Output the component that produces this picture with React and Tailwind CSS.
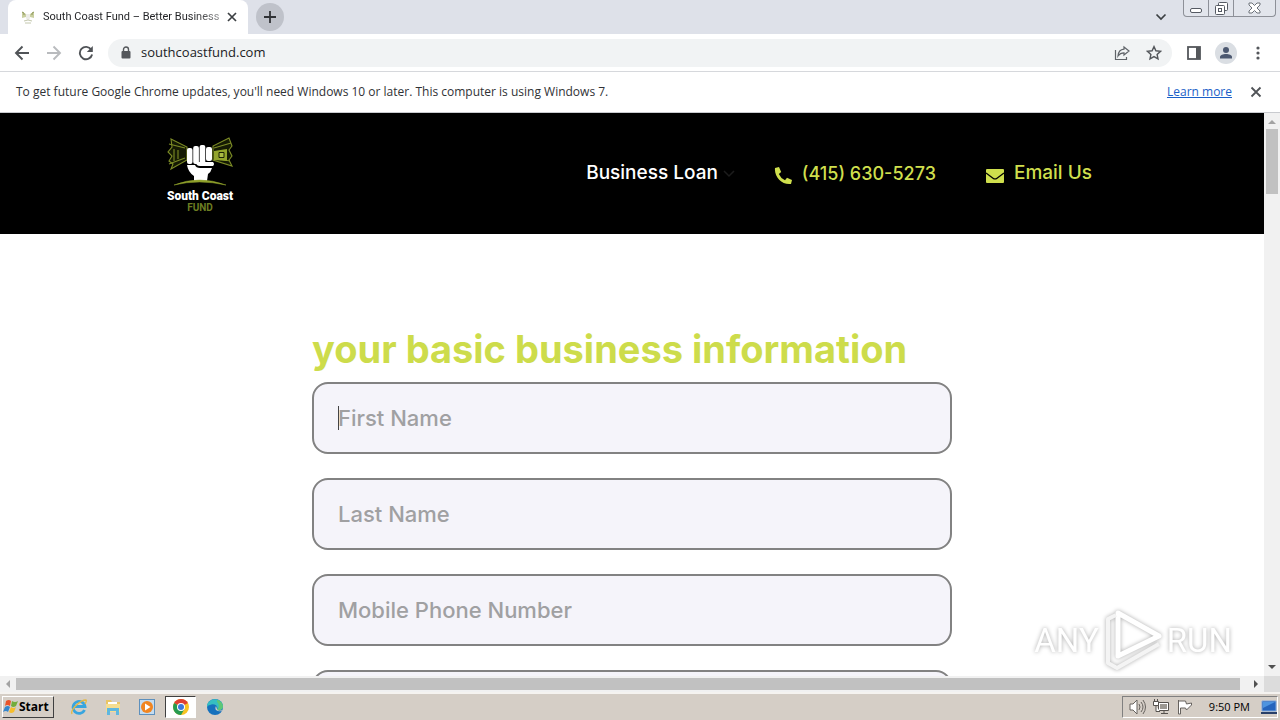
import { useState } from "react";

const fields = [
  { id: "first-name", label: "First Name" },
  { id: "last-name", label: "Last Name" },
  { id: "mobile-phone", label: "Mobile Phone Number" },
  { id: "email", label: "Email Address" },
];

function Favicon() {
  return (
    <svg viewBox="0 0 16 16" className="size-4 shrink-0" aria-hidden="true">
      <path d="M2 3l4 2v3L2 9zM14 3l-4 2v3l4 1z" fill="#c9cfa0" />
      <path d="M2 3l2 1v2M14 3l-2 1v2" fill="none" stroke="#8b9554" />
      <path d="M6 5h4v4l-1 2H7L6 9z" fill="#ecece8" />
      <path d="M4 12q4-2 8 0M5 14h6" fill="none" stroke="#c4c8ae" />
    </svg>
  );
}

function TabStrip() {
  return (
    <div className="flex h-[34px] shrink-0 items-start bg-[#dee1e9]">
      <div className="ml-2 flex h-[34px] w-[240px] items-center rounded-t-lg bg-white pl-3 pr-2">
        <Favicon />
        <span className="ml-[7px] w-[176px] whitespace-nowrap bg-linear-to-r from-[#202124] from-85% to-[#20212480] bg-clip-text font-['Roboto',sans-serif] text-[11px] text-transparent">
          South Coast Fund – Better Business
        </span>
        <button aria-label="Close tab" className="ml-[5px] flex size-4 items-center justify-center">
          <svg viewBox="0 0 10 10" className="size-[10px]">
            <path d="M1 1l8 8M9 1l-8 8" stroke="#3c4043" strokeWidth="1.7" />
          </svg>
        </button>
      </div>
      <button aria-label="New tab" className="ml-2 mt-[3px] flex size-7 items-center justify-center rounded-full bg-[#bfc2ca]">
        <svg viewBox="0 0 12 12" className="size-3">
          <path d="M6 0v12M0 6h12" stroke="#303236" strokeWidth="1.8" />
        </svg>
      </button>
      <div className="ml-auto flex items-start">
        <button aria-label="Search tabs" className="mr-4 mt-[11px] flex size-3 items-center justify-center">
          <svg viewBox="0 0 12 12" className="size-3">
            <path d="M1.500 3.500L6 8l4.500-4.500" fill="none" stroke="#3c4043" strokeWidth="1.700" />
          </svg>
        </button>
        <div className="mr-1 flex h-[17px] divide-x divide-[#8d9098] rounded-b-[4px] border border-t-0 border-[#8d9098] bg-[#e2e5ec]">
          <button aria-label="Minimize" className="flex w-[25px] items-center justify-center pt-1">
            <svg viewBox="0 0 12 5" className="h-[5px] w-3">
              <rect x=".5" y=".5" width="11" height="4" rx="1.500" fill="#fff" stroke="#555a63" />
            </svg>
          </button>
          <button aria-label="Restore" className="flex w-[25px] items-center justify-center">
            <svg viewBox="0 0 13 13" className="size-[13px]" fill="#fff" stroke="#555a63">
              <rect x="3.500" y=".5" width="9" height="8" rx="1" />
              <rect x=".5" y="3.500" width="9" height="9" rx="1" />
              <rect x="3.500" y="6.500" width="3" height="3" />
            </svg>
          </button>
          <button aria-label="Close window" className="flex w-[41px] items-center justify-center">
            <svg viewBox="0 0 13 12" className="h-3 w-[13px]">
              <path d="M1 1h3l2.500 2.500L9 1h3v2L9 6l3 3v2H9L6.500 8.500 4 11H1V9l3-3-3-3z" fill="#fff" stroke="#6d727a" />
            </svg>
          </button>
        </div>
      </div>
    </div>
  );
}

function Toolbar() {
  const [url, setUrl] = useState("southcoastfund.com");

  return (
    <div className="flex h-[38px] shrink-0 items-center border-b border-[#d6d8dc] bg-white pl-3 pr-[14px]">
      <button aria-label="Back" className="flex size-5 items-center justify-center">
        <svg viewBox="0 0 16 16" className="size-4" fill="none" stroke="#505357" strokeWidth="1.900">
          <path d="M15 8H2M8.500 1.500L2 8l6.500 6.500" />
        </svg>
      </button>
      <button aria-label="Forward" className="ml-3 flex size-5 items-center justify-center">
        <svg viewBox="0 0 16 16" className="size-4" fill="none" stroke="#b9bbbe" strokeWidth="1.900">
          <path d="M1 8h13M7.500 1.500L14 8l-6.500 6.500" />
        </svg>
      </button>
      <button aria-label="Reload" className="ml-3 flex size-5 items-center justify-center">
        <svg viewBox="0 0 16 16" className="size-4">
          <path d="M13.200 4.600A6.200 6.200 0 1 0 14.100 9.500" fill="none" stroke="#505357" strokeWidth="1.900" />
          <path d="M14.800 1v6h-6z" fill="#505357" />
        </svg>
      </button>
      <div className="ml-3 flex h-7 min-w-0 flex-1 items-center rounded-full bg-[#f1f3f4] pl-3 pr-2">
        <svg viewBox="0 0 10 13" className="ml-px h-[13px] w-[10px] shrink-0">
          <path d="M2.500 6V3.500a2.500 2.500 0 0 1 5 0V6" fill="none" stroke="#54575b" strokeWidth="1.400" />
          <rect x=".5" y="5" width="9" height="7.500" rx="1" fill="#54575b" />
        </svg>
        <input
          aria-label="Address"
          value={url}
          onChange={(e) => setUrl(e.target.value)}
          className="ml-[10px] min-w-0 flex-1 bg-transparent text-[13px] text-[#202124] outline-none"
        />
        <button aria-label="Share" className="flex size-4 items-center justify-center">
          <svg viewBox="0 0 16 16" className="size-4" fill="none" stroke="#5f6368" strokeWidth="1.200">
            <path d="M1.500 5v9.500h11V12" />
            <path d="M10 2l5 4-5 4V7.800C7 7.800 5.500 8.800 4 11c.3-4 2.500-6.500 6-6.800z" />
          </svg>
        </button>
        <button aria-label="Bookmark this page" className="ml-4 mr-[2px] flex size-4 items-center justify-center">
          <svg viewBox="0 0 16 16" className="size-4" fill="none" stroke="#54575b" strokeWidth="1.400">
            <path d="M8 1.600l1.900 4.200 4.600.5-3.400 3.100.9 4.500L8 11.600l-4 2.300.9-4.500L1.500 6.300l4.600-.5z" />
          </svg>
        </button>
      </div>
      <button aria-label="Side panel" className="ml-[14px] flex size-4 items-center justify-center">
        <svg viewBox="0 0 14 14" className="size-[14px]">
          <rect x="1" y="1" width="12" height="12" fill="none" stroke="#54575b" strokeWidth="1.800" />
          <path d="M9 1h4v12H9z" fill="#54575b" />
        </svg>
      </button>
      <button aria-label="Profile" className="ml-[13px] flex size-[22px] items-center justify-center rounded-full bg-[#dadee3]">
        <svg viewBox="0 0 14 14" className="size-[14px]" fill="#4c5870">
          <circle cx="7" cy="4" r="3" />
          <path d="M1 12.500V11c0-2 3-3 6-3s6 1 6 3v1.500z" />
        </svg>
      </button>
      <button aria-label="Menu" className="ml-[13px] flex size-4 items-center justify-center">
        <svg viewBox="0 0 16 16" className="size-4" fill="#54575b">
          <circle cx="8" cy="3" r="1.600" />
          <circle cx="8" cy="8" r="1.600" />
          <circle cx="8" cy="13" r="1.600" />
        </svg>
      </button>
    </div>
  );
}

function InfoBar() {
  return (
    <div className="flex h-[41px] shrink-0 items-center border-b border-[#c9cbcf] bg-white px-4 text-[12px] text-[#303236]">
      <p>To get future Google Chrome updates, you'll need Windows 10 or later. This computer is using Windows 7.</p>
      <a href="#learn" className="ml-auto text-[#1a5fc8] underline">Learn more</a>
      <button aria-label="Dismiss" className="ml-4 flex size-4 items-center justify-center">
        <svg viewBox="0 0 12 12" className="size-3">
          <path d="M1.500 1.500l9 9M10.500 1.500l-9 9" stroke="#505357" strokeWidth="1.800" />
        </svg>
      </button>
    </div>
  );
}

function Logo() {
  return (
    <svg viewBox="0 0 68 76" className="h-[76px] w-[68px]" role="img" aria-label="South Coast Fund">
      {/* bank notes */}
      <g fill="#151a04" stroke="#7d8c26" strokeWidth="1.100">
        <path d="M5 3l16 8v13L5 33l2-5-4-3 3-5-4-4 4-5z" />
        <path d="M3 8l16 4M3 28l16-6M8 13v12M12 14v9" fill="none" />
        <path d="M63 2L47 10v14l19 6-3-6 3-4-3-6 3-4z" />
        <path d="M65 7l-17 5M64 25l-16-3" fill="none" />
      </g>
      <path d="M48 15l13-2v12l-13-1z" fill="#93a52b" />
      <path d="M53 16.500h5v5h-5z" fill="#a9ba44" stroke="#1d2206" />
      {/* fist */}
      <g fill="#fff">
        <rect x="21" y="12" width="5.500" height="16" rx="2" />
        <rect x="27.200" y="10" width="5.700" height="18" rx="2" />
        <rect x="33.600" y="9" width="5.700" height="19" rx="2" />
        <rect x="40" y="11" width="6" height="14" rx="2" />
        <path d="M21 29h8q1 3 5 3h12q-1 4-4 6l-1 7H28v-5q-6-4-7-11z" />
        <path d="M30 26h17q2 2 0 4H34q-4 0-4-4z" />
      </g>
      <path d="M8 49q25-10 52 0Q33 43 8 49z" fill="#8fa02a" stroke="#8fa02a" strokeWidth=".5" />
      <text x="34" y="64" textAnchor="middle" fontFamily="Roboto, sans-serif" fontWeight="900" fontSize="12" fill="#fff">
        South Coast
      </text>
      <text x="34" y="75" textAnchor="middle" fontFamily="Roboto, sans-serif" fontWeight="700" fontSize="10" fill="#6d7d22">
        FUND
      </text>
    </svg>
  );
}

function SiteHeader() {
  return (
    <header className="flex h-[121px] items-center justify-between bg-black pl-[166px] pr-[172px] font-['Inter',sans-serif] text-[19px] font-medium">
      <a href="#home">
        <Logo />
      </a>
      <nav className="flex items-center whitespace-nowrap text-[#cfdf4d]">
        <a href="#loan" className="flex items-center gap-1 text-white">
          Business Loan
          <svg viewBox="0 0 14 10" className="h-[10px] w-[14px]">
            <path d="M2 2l5 5 5-5" fill="none" stroke="#1c1c1c" strokeWidth="1.500" />
          </svg>
        </a>
        <a href="tel:4156305273" className="ml-[38px] flex items-center gap-[10px] text-[18px]">
          <svg viewBox="0 0 18 18" className="mt-1 size-[18px]" fill="currentColor">
            <path d="M1 1l4-1 2.200 5-2.400 2a12 12 0 0 0 6.200 6.200l2-2.400 5 2.200-1 4c-9 1.200-17-7-16-16z" />
          </svg>
          (415) 630-5273
        </a>
        <a href="#email" className="ml-[50px] flex items-center gap-[10px]">
          <svg viewBox="0 0 18 14" className="mt-1 h-[14px] w-[18px]">
            <rect width="18" height="14" rx="1" fill="currentColor" />
            <path d="M0 4l7 5.200q2 1.500 4 0L18 4" fill="none" stroke="#000" strokeWidth="1.300" />
          </svg>
          Email Us
        </a>
      </nav>
    </header>
  );
}

function BusinessForm() {
  const [values, setValues] = useState({});

  return (
    <form className="mx-auto mt-[92px] flex w-full max-w-[640px] flex-col gap-6 font-['Inter',sans-serif]">
      <h1 className="-mb-[14px] whitespace-nowrap text-[38px] font-bold leading-[46px] text-[#cddc4b]">
        your basic business information
      </h1>
      {fields.map((field, i) => (
        <label key={field.id} htmlFor={field.id} className="relative block">
          <input
            id={field.id}
            aria-label={field.label}
            placeholder={field.label}
            value={values[field.id] || ""}
            onChange={(e) => setValues({ ...values, [field.id]: e.target.value })}
            className="block h-[72px] w-full rounded-2xl border-2 border-[#828282] bg-[#f5f4fa] px-6 text-[22px] font-medium text-[#333] outline-none placeholder:text-[#a0a0a2]"
          />
          {i === 0 && <span className="absolute left-[26px] top-6 h-6 w-px bg-[#444]" />}
        </label>
      ))}
    </form>
  );
}

function Arrow({ className }) {
  return (
    <svg viewBox="0 0 8 8" className={className} fill="currentColor">
      <path d="M0 6l4-4 4 4z" />
    </svg>
  );
}

function Watermark() {
  return (
    <div className="absolute bottom-1 right-12 flex items-center gap-1 font-['Roboto',sans-serif] text-[33px] leading-none text-white drop-shadow-[0_0_2px_#aaa]">
      <span>ANY</span>
      <svg viewBox="0 0 60 64" className="h-16 w-[60px]" fill="none" strokeLinejoin="round">
        <path d="M15 5v43L56 28z" stroke="#fff" strokeWidth="5" />
        <path d="M13 7L5 11v44l9 5L56 36" stroke="#f4f4f4" strokeWidth="4" />
      </svg>
      <span>RUN</span>
    </div>
  );
}

function Taskbar() {
  return (
    <footer className="flex h-7 shrink-0 items-center border-t-2 border-[#f5f3f0] bg-[#d5cec6] pl-[2px] text-black">
      <button className="flex h-[22px] w-[52px] items-center border border-b-[#404040] border-l-white border-r-[#404040] border-t-white">
        <svg viewBox="0 0 16 16" className="size-4 shrink-0">
          <path d="M3 2q3-2 5 0L7 7q-3-2-5 0z" fill="#e9542a" />
          <path d="M9 2q3 2 6 0l-2 5q-3 2-5 0z" fill="#74ad3c" />
          <path d="M2 8q3-2 5 0l-2 5q-2-2-5 0z" fill="#3486cc" />
          <path d="M8 8q3 2 5 0l-2 5q-3 2-5 0z" fill="#f6bd2c" />
        </svg>
        <span className="text-[12px] font-bold">Start</span>
      </button>
      <button aria-label="Internet Explorer" className="ml-[17px] size-4">
        <svg viewBox="0 0 16 16" className="size-4">
          <path d="M13.500 11a6 6 0 1 1 .5-3.500H4" fill="none" stroke="#38a5df" strokeWidth="2.800" />
          <path d="M1 15C-1 11 9 1 15 1q1 1-1 4" fill="none" stroke="#e5b842" strokeWidth="1.300" />
        </svg>
      </button>
      <button aria-label="Windows Explorer" className="ml-[18px] size-4">
        <svg viewBox="0 0 16 16" className="size-4">
          <path d="M1 1h5l1 2h8v9H1z" fill="#e9c565" />
          <path d="M3 3h9v3H3z" fill="#fff" />
          <path d="M1 5h14v8H1z" fill="#f5dd90" />
          <path d="M2 16V9h12v7h-3v-4H5v4z" fill="#5fb7df" />
        </svg>
      </button>
      <button aria-label="Media Player" className="ml-[18px] size-4">
        <svg viewBox="0 0 16 16" className="size-4">
          <rect x=".5" y=".5" width="15" height="15" fill="#c4dcf0" stroke="#5d90bd" />
          <circle cx="8" cy="8" r="6" fill="#f18520" />
          <path d="M6 4.500L11.500 8 6 11.500z" fill="#fff" />
        </svg>
      </button>
      <button aria-label="Google Chrome" className="ml-[10px] flex h-[22px] w-[31px] items-center justify-center border border-b-white border-l-[#404040] border-r-white border-t-[#404040] bg-white">
        <svg viewBox="0 0 16 16" className="size-4">
          <circle cx="8" cy="8" r="8" fill="#f8c323" />
          <path d="M8 8L1.100 4A8 8 0 0 1 14.900 4z" fill="#df4033" />
          <path d="M8 8L1.100 4A8 8 0 0 0 8 16l3.500-6z" fill="#279b51" />
          <circle cx="8" cy="8" r="4" fill="#fff" />
          <circle cx="8" cy="8" r="3" fill="#3c78dc" />
        </svg>
      </button>
      <button aria-label="Microsoft Edge" className="ml-[11px] size-4">
        <svg viewBox="0 0 16 16" className="size-4">
          <circle cx="8" cy="8" r="8" fill="#1671bd" />
          <path d="M0 7C1-2 15-2 16 7c0 4-4 5-6 4 2-4-3-7-7-5Q1 6 0 8z" fill="#36bfc2" />
          <path d="M10 1q5 1 6 6c0 4-4 5-6 4 2-2 3-5 0-8z" fill="#5ec777" />
          <path d="M9 7q-2 4 2 5t4-1q-4 2-5-1z" fill="#d5cec6" />
        </svg>
      </button>

      <div className="ml-auto mr-[2px] flex h-[22px] items-center border border-b-white border-l-[#808080] border-r-white border-t-[#808080] pl-[6px] text-[11px]">
        <svg viewBox="0 0 18 16" className="h-4 w-[18px]" fill="none" stroke="#66625e">
          <path d="M1 5h3l4-4v14l-4-4H1z" fill="#fff" />
          <path d="M10 5q2 3 0 6M12 3q4 5 0 10M14 1q5 7 0 14" />
        </svg>
        <svg viewBox="0 0 16 16" className="ml-[6px] size-4" fill="#fff" stroke="#55514d">
          <path d="M5.500 3.500h10v8h-10zM8 14.500h7M11 12v2" />
          <path d="M7 5h7v5H7z" fill="#9c9892" stroke="none" />
          <path d="M.5 2.500h5v4h-5zM1.500 0v3M4.500 0v3M3 7v5.500h4" />
        </svg>
        <svg viewBox="0 0 16 16" className="ml-2 size-4" fill="#fff" stroke="#66625e">
          <path d="M1.500 1v14h2V9h5l1 2 5-5v-2l-5 1-1-3h-7z" />
        </svg>
        <time className="ml-4 whitespace-nowrap">9:50 PM</time>
        <svg viewBox="0 0 16 14" className="ml-[11px] h-[14px] w-4">
          <path d="M1 1h14v10H1z" fill="#2464bd" stroke="#7fa7dc" />
          <path d="M2 2h12L2 8z" fill="#4d94e0" />
          <path d="M0 12h16v2H0z" fill="#283f68" />
        </svg>
      </div>
    </footer>
  );
}

export default function App() {
  return (
    <div className="flex h-screen flex-col overflow-hidden bg-white font-['Open_Sans',sans-serif]">
      <TabStrip />
      <Toolbar />
      <InfoBar />
      <div className="relative flex min-h-0 flex-1">
        <main className="min-w-0 flex-1 overflow-hidden bg-white">
          <SiteHeader />
          <BusinessForm />
        </main>
        <div className="flex w-4 shrink-0 flex-col items-center bg-[#f1f1f1]">
          <Arrow className="mt-[5px] size-2 text-[#a3a3a3]" />
          <div className="mt-[3px] h-[65px] w-3 bg-[#c1c1c1]" />
          <Arrow className="mb-[5px] mt-auto size-2 rotate-180 text-[#505050]" />
        </div>
        <Watermark />
      </div>
      <div className="flex h-4 shrink-0 items-center bg-[#f1f1f1]">
        <Arrow className="ml-1 size-2 -rotate-90 text-[#a3a3a3]" />
        <div className="ml-1 h-3 flex-1 bg-[#c1c1c1]" />
        <Arrow className="ml-3 mr-1 size-2 rotate-90 text-[#505050]" />
        <div className="h-4 w-4 bg-[#dcdcdc]" />
      </div>
      <Taskbar />
    </div>
  );
}
